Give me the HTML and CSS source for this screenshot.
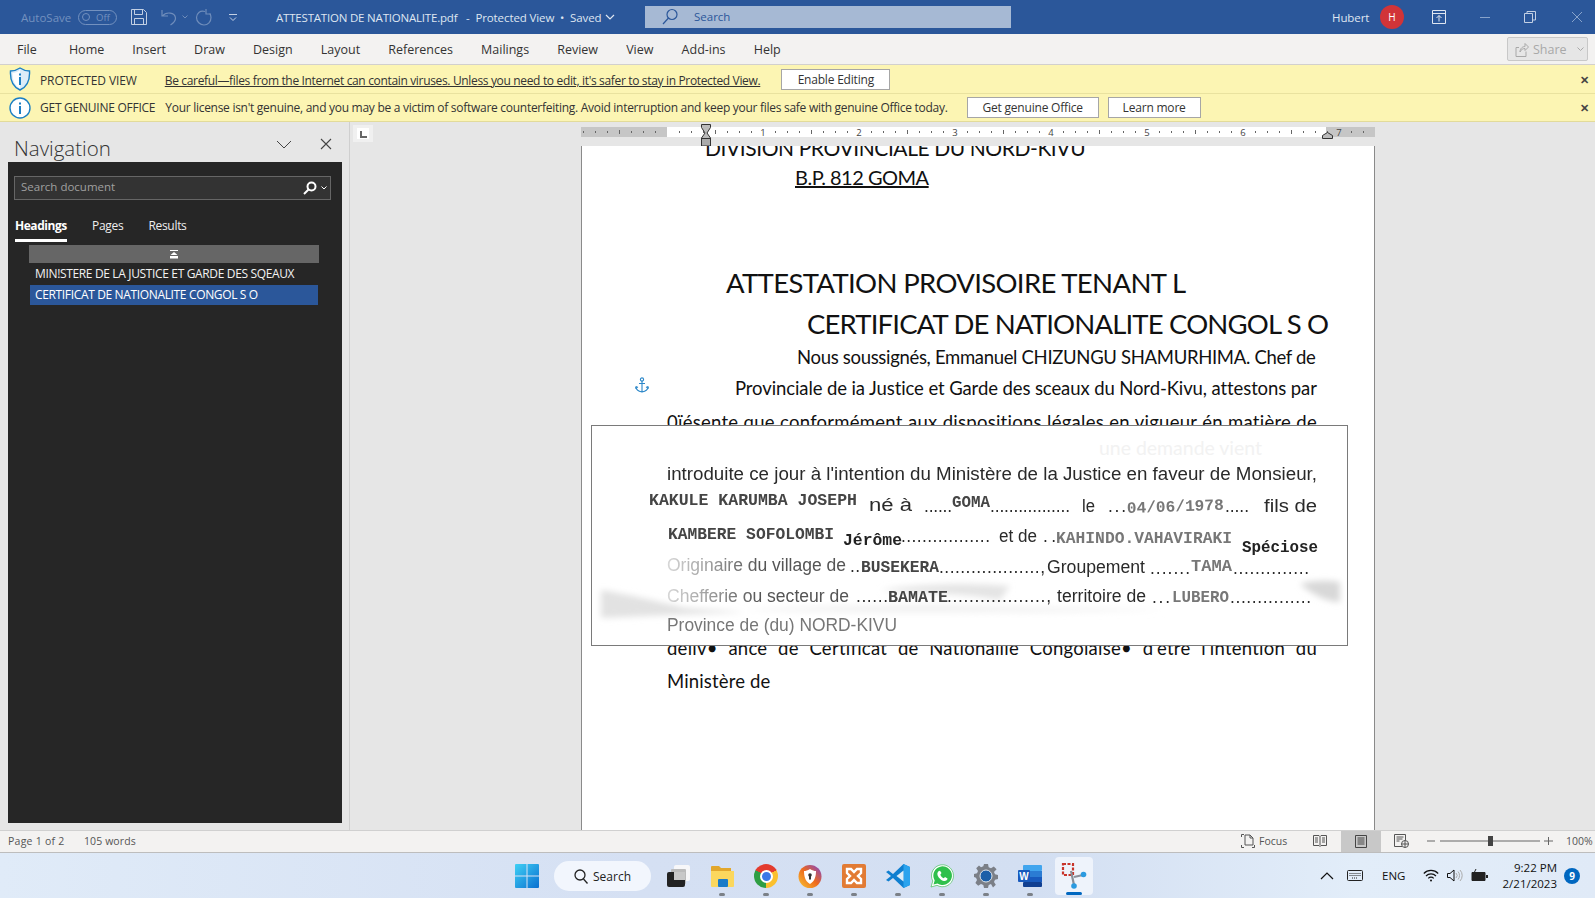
FILE: index.html
```html
<!DOCTYPE html>
<html lang="en">
<head>
<meta charset="utf-8">
<title>ATTESTATION DE NATIONALITE.pdf - Word</title>
<link rel="stylesheet" href="styles.css">
</head>
<body>
<div class="app">
  <header class="titlebar">
    <span class="autosave">AutoSave</span>
    <span class="toggle"><i class="knob"></i><span>Off</span></span>
    <svg class="qa save" width="18" height="18" viewBox="0 0 18 18" fill="none" stroke="#c3d0e4" stroke-width="1"><path d="M1.500 1.500h12l3 3v12h-15z"/><path d="M4.500 1.500v5h8v-5M4.500 16.500v-6h9v6"/></svg>
    <svg class="qa undo" width="18" height="18" viewBox="0 0 18 18" fill="none" stroke="#6f8dbb" stroke-width="1.200"><path d="M2 2v6h6M2.500 8C6 3.500 15 4 15.500 10c.2 3-2 5-5 7"/></svg>
    <svg class="qa undoarrow" width="6" height="4" viewBox="0 0 6 4" fill="none" stroke="#6f8dbb"><path d="M.5.5 3 3 5.500 .5"/></svg>
    <svg class="qa redo" width="18" height="18" viewBox="0 0 18 18" fill="none" stroke="#6f8dbb" stroke-width="1.200"><path d="M11 1v5h5M10 3.500C5 2 1.500 5.500 1.500 9.500S5 17 9 17s7-3 7-7.500c0-1.500-.5-3-1.500-4"/></svg>
    <svg class="qa custom" width="8" height="9" viewBox="0 0 8 9" fill="none" stroke="#c3d0e4"><path d="M0 1.500h8M1 4.500 4 7.500 7 4.500"/></svg>
    <span class="doc-title">ATTESTATION DE NATIONALITE.pdf</span>
    <span class="doc-state">-&nbsp; Protected View &nbsp;•&nbsp; Saved</span>
    <svg class="qa statechev" width="10" height="6" viewBox="0 0 10 6" fill="none" stroke="#dfe6f1" stroke-width="1.200"><path d="M1 1l4 4 4-4"/></svg>
    <div class="searchbox">
      <svg width="18" height="18" viewBox="0 0 18 18" fill="none" stroke="#2b579a" stroke-width="1.200"><circle cx="11" cy="6.500" r="5"/><path d="M7.500 10 2 16"/></svg>
      <span>Search</span>
    </div>
    <span class="username">Hubert</span>
    <span class="avatar">H</span>
    <svg class="win-btn ribbon-btn" width="14" height="14" viewBox="0 0 14 14" fill="none" stroke="#dfe6f1" stroke-width="1"><path d="M.5.500h13v13H.5zM.5 3.500h13M7 11.500V5.500M4.500 8 7 5.500 9.500 8"/></svg>
    <svg class="win-btn min-btn" width="12" height="12" viewBox="0 0 12 12" stroke="#88a3cb"><path d="M1 6.500h10"/></svg>
    <svg class="win-btn restore-btn" width="12" height="12" viewBox="0 0 12 12" fill="none" stroke="#c3d0e4"><path d="M.5 2.500h8v9h-8zM3 2.500V.500h8.500v8.500H8.500"/></svg>
    <svg class="win-btn close-btn" width="12" height="12" viewBox="0 0 12 12" fill="none" stroke="#88a3cb"><path d="M1 1l10 10M11 1 1 11"/></svg>
  </header>

  <nav class="ribbon">
    <span class="tab tab-file">File</span><span class="tab">Home</span><span class="tab">Insert</span><span class="tab">Draw</span><span class="tab">Design</span><span class="tab">Layout</span><span class="tab">References</span><span class="tab">Mailings</span><span class="tab">Review</span><span class="tab">View</span><span class="tab">Add-ins</span><span class="tab">Help</span>
    <div class="share">
      <svg width="14" height="15" viewBox="0 0 14 15" fill="none" stroke="#a8a8a8"><path d="M1 5.500h3M1 5.500v9h10v-5M5 10c0-4 3-5.500 5-5.500V1.500l3.500 3.500L10 8.500V6.500c-2 0-4 1-5 3.500z"/></svg>
      <span>Share</span>
      <svg class="share-chev" width="7" height="5" viewBox="0 0 7 5" fill="none" stroke="#a8a8a8"><path d="M.5.500 3.500 3.500 6.500.5"/></svg>
    </div>
  </nav>

  <section class="msgbar first">
    <svg class="msg-icon" width="22" height="24" viewBox="0 0 22 24"><path d="M11 1c3 2 6 3 9.500 3 .5 8-1 15-9.500 19C2.500 19 1 12 1.500 4 5 4 8 3 11 1z" fill="#dcecf8" stroke="#1b7fc4" stroke-width="1.400"/><path d="M11 3v18.500C5 18 3.500 12 3.500 6 6 6 9 5 11 3z" fill="#fff"/><rect x="10" y="10" width="2" height="8" fill="#1b7fc4"/><rect x="10" y="6.500" width="2" height="2" fill="#1b7fc4"/></svg>
    <strong class="msg-head">PROTECTED VIEW</strong>
    <span class="msg-link">Be careful—files from the Internet can contain viruses. Unless you need to edit, it's safer to stay in Protected View.</span>
    <button class="msg-btn btn-enable">Enable Editing</button>
    <span class="msg-close">✕</span>
  </section>
  <section class="msgbar second">
    <svg class="msg-icon" width="22" height="22" viewBox="0 0 22 22"><circle cx="11" cy="11" r="10" fill="#fff" stroke="#1b7fc4" stroke-width="1.400"/><rect x="10" y="9" width="2" height="8" fill="#1b7fc4"/><rect x="10" y="5.500" width="2" height="2" fill="#1b7fc4"/></svg>
    <strong class="msg-head">GET GENUINE OFFICE</strong>
    <span class="msg-text">Your license isn't genuine, and you may be a victim of software counterfeiting. Avoid interruption and keep your files safe with genuine Office today.</span>
    <button class="msg-btn btn-genuine">Get genuine Office</button>
    <button class="msg-btn btn-learn">Learn more</button>
    <span class="msg-close">✕</span>
  </section>

  <main class="workspace">
    <aside class="nav">
      <div class="nav-head">
        <span class="nav-title">Navigation</span>
        <svg class="nav-chev" width="16" height="9" viewBox="0 0 16 9" fill="none" stroke="#444"><path d="M1 1l7 7 7-7"/></svg>
        <svg class="nav-x" width="12" height="12" viewBox="0 0 12 12" fill="none" stroke="#444" stroke-width="1.100"><path d="M1 1l10 10M11 1 1 11"/></svg>
      </div>
      <div class="nav-body">
        <div class="nav-search">
          <span>Search document</span>
          <svg width="14" height="14" viewBox="0 0 14 14" fill="none" stroke="#fff" stroke-width="2"><circle cx="8.500" cy="5.500" r="4"/><path d="M5.500 8.500 1 13"/></svg>
          <svg class="ns-chev" width="6" height="4" viewBox="0 0 6 4" fill="none" stroke="#fff"><path d="M.5.500 3 3 5.500.5"/></svg>
        </div>
        <div class="nav-tabs">
          <span class="nt nt-on">Headings</span><span class="nt">Pages</span><span class="nt">Results</span>
        </div>
        <div class="nav-jump"><svg width="10" height="9" viewBox="0 0 10 9" fill="#fff"><rect x="1" y="0" width="8" height="1"/><path d="M5 2 8.500 5H1.500zM1 6h8v2.500H1z"/></svg></div>
        <div class="nav-item">MIN!STERE DE LA JUSTICE ET GARDE DES SQEAUX</div>
        <div class="nav-item selected">CERTIFICAT DE NATIONALITE CONGOL S O</div>
      </div>
    </aside>
    <div class="splitter"></div>
    <div class="docarea">
      <div class="tabstop"><i></i></div>
      <div class="ruler-row">
        <svg class="ruler" width="794" height="10" viewBox="0 0 794 10">
          <defs>
            <pattern id="ticks" x="86" y="0" width="96" height="10" patternUnits="userSpaceOnUse">
              <rect x="12" y="4" width="1" height="2" fill="#666"/><rect x="24" y="4" width="1" height="2" fill="#666"/><rect x="36" y="4" width="1" height="2" fill="#666"/><rect x="48" y="3" width="1" height="4" fill="#666"/><rect x="60" y="4" width="1" height="2" fill="#666"/><rect x="72" y="4" width="1" height="2" fill="#666"/><rect x="84" y="4" width="1" height="2" fill="#666"/>
            </pattern>
          </defs>
          <rect width="794" height="10" fill="#c6c6c6"/>
          <rect x="86" width="659" height="10" fill="#fff"/>
          <rect width="794" height="10" fill="url(#ticks)"/>
          <g class="ruler-num" text-anchor="middle">
            <text x="182" y="8.500">1</text><text x="278" y="8.500">2</text><text x="374" y="8.500">3</text><text x="470" y="8.500">4</text><text x="566" y="8.500">5</text><text x="662" y="8.500">6</text><text x="758" y="8.500">7</text>
          </g>
        </svg>
        <svg class="marker-left" width="12" height="23" viewBox="0 0 12 23"><path d="M1.500.5h9v3L7 9l3.500 5v3.500h-9V14L5 9 1.500 3.500z" fill="#bbb" stroke="#333"/><rect x="1.500" y="14.500" width="9" height="7.500" fill="#aaa" stroke="#333"/></svg>
        <svg class="marker-right" width="11" height="7" viewBox="0 0 11 7"><path d="M.5 6.500V3.500L5.500.5l5 3v3z" fill="#bbb" stroke="#333"/></svg>
      </div>
      <div class="page">
        <p class="dl l-div">DIVISION PROVINCIALE DU NORD-KIVU</p>
        <p class="dl l-bp"><u>B.P. 812 GOMA</u></p>
        <h1 class="dl l-att">ATTESTATION PROVISOIRE TENANT L</h1>
        <h1 class="dl l-cert">CERTIFICAT DE NATIONALITE CONGOL S O</h1>
        <p class="dl l-nous">Nous soussignés, Emmanuel CHIZUNGU SHAMURHIMA. Chef de</p>
        <p class="dl l-prov">Provinciale de ia Justice et Garde des sceaux du Nord-Kivu, attestons par</p>
        <p class="dl l-just l-pres">0ïésente que conformément aux dispositions légales en vigueur én matière de</p>
        <p class="dl l-just l-deliv">déliv• ance de Certificat de Nationaliié Congoiaise• d'être l'intention du</p>
        <p class="dl l-min">Ministère de</p>
        <svg class="anchor" width="14" height="16" viewBox="0 0 14 16" fill="none" stroke="#2a86c8" stroke-width="1.100"><circle cx="7" cy="2.500" r="1.600"/><path d="M7 4v11M4 6.500h6M1 9.500c0 3 3 5 6 5.500 3-.5 6-2.500 6-5.500M1 9.500l-.5 2M1 9.500l2 1M13 9.500l.5 2M13 9.500l-2 1"/></svg>

        <svg class="scan" width="757" height="221" viewBox="591 425 757 221">
          <defs>
            <filter id="soft" x="-20%" y="-80%" width="140%" height="260%"><feGaussianBlur stdDeviation="3"/></filter>
            <filter id="ink"><feGaussianBlur stdDeviation="0.350"/></filter>
            <linearGradient id="fade" x1="667" x2="760" y1="0" y2="0" gradientUnits="userSpaceOnUse"><stop offset="0" stop-color="#d8d8d8"/><stop offset="1" stop-color="#555"/></linearGradient>
          </defs>
          <rect x="591" y="425" width="757" height="221" fill="#fff"/>
          <path d="M601 590c25 4 50 10 85 18l60 4c-50 2-100 4-145 6z" fill="#e2e2e2" filter="url(#soft)"/>
          <path d="M740 610c80-4 180-8 260-4l170 4c-150 4-300 4-430 0z" fill="#f3f3f3" filter="url(#soft)"/>
          <path d="M880 590c40-6 90-8 130-4l-10 14c-40-8-80-6-120-10z" fill="#e4e4e4" filter="url(#soft)"/>
          <path d="M1300 584c14-4 26-4 40-2v20c-14 0-28-8-40-18z" fill="#d8d8d8" filter="url(#soft)"/>
          <text class="faint" x="1099" y="455" textLength="163" lengthAdjust="spacingAndGlyphs">une demande vient</text>
          <g class="printed" filter="url(#ink)">
            <text x="667" y="480" textLength="650" lengthAdjust="spacingAndGlyphs">introduite ce jour à l'intention du Ministère de la Justice en faveur de Monsieur,</text>
            <text x="869" y="511" textLength="43" lengthAdjust="spacingAndGlyphs">né à</text>
            <text x="924" y="512" textLength="28">......</text>
            <text x="990" y="512" textLength="80">.................</text>
            <text x="1082" y="512" textLength="13" lengthAdjust="spacingAndGlyphs">le</text>
            <text x="1108" y="512" textLength="18">...</text>
            <text x="1225" y="512" textLength="24">.....</text>
            <text x="1264" y="512" textLength="53" lengthAdjust="spacingAndGlyphs">fils de</text>
            <text x="901" y="542" textLength="89">.................</text>
            <text x="999" y="542" textLength="38" lengthAdjust="spacingAndGlyphs">et de</text>
            <text x="1043" y="542" textLength="13">..</text>
            <text x="667" y="571" textLength="179" lengthAdjust="spacingAndGlyphs" class="fade">Originaire du village de</text>
            <text x="850" y="572" textLength="10">..</text>
            <text x="939" y="573" textLength="106">...................,</text>
            <text x="1047" y="573" textLength="98" lengthAdjust="spacingAndGlyphs">Groupement</text>
            <text x="1150" y="574" textLength="40">.......</text>
            <text x="1233" y="574" textLength="76">..............</text>
            <text x="667" y="602" textLength="182" lengthAdjust="spacingAndGlyphs" class="fade">Chefferie ou secteur de</text>
            <text x="856" y="602" textLength="32">......</text>
            <text x="947" y="602" textLength="104">..................,</text>
            <text x="1057" y="602" textLength="89" lengthAdjust="spacingAndGlyphs">territoire de</text>
            <text x="1152" y="603" textLength="18">...</text>
            <text x="1230" y="603" textLength="81">...............</text>
            <text class="dim" x="667" y="631" textLength="230" lengthAdjust="spacingAndGlyphs">Province de (du) NORD-KIVU</text>
          </g>
          <g class="typed" filter="url(#ink)">
            <text x="649" y="505" textLength="208" lengthAdjust="spacingAndGlyphs">KAKULE KARUMBA JOSEPH</text>
            <text x="952" y="507" textLength="38" lengthAdjust="spacingAndGlyphs">GOMA</text>
            <text class="light" x="1127" y="513" textLength="97" lengthAdjust="spacingAndGlyphs" transform="rotate(-2 1127 513)">04/06/1978</text>
            <text x="668" y="539" textLength="166" lengthAdjust="spacingAndGlyphs">KAMBERE SOFOLOMBI</text>
            <text class="bold" x="843" y="545" textLength="59" lengthAdjust="spacingAndGlyphs">Jérôme</text>
            <text class="light" x="1056" y="543" textLength="176" lengthAdjust="spacingAndGlyphs">KAHINDO.VAHAVIRAKI</text>
            <text class="bold" x="1242" y="552" textLength="76" lengthAdjust="spacingAndGlyphs">Spéciose</text>
            <text x="861" y="572" textLength="78" lengthAdjust="spacingAndGlyphs">BUSEKERA</text>
            <text class="light" x="1191" y="571" textLength="41" lengthAdjust="spacingAndGlyphs">TAMA</text>
            <text x="888" y="602" textLength="60" lengthAdjust="spacingAndGlyphs">BAMATE</text>
            <text class="light" x="1172" y="602" textLength="57" lengthAdjust="spacingAndGlyphs">LUBERO</text>
          </g>
          <rect x="591.500" y="425.500" width="756" height="220" fill="none" stroke="#7a7a7a"/>
        </svg>
      </div>
    </div>
  </main>

  <footer class="statusbar">
    <span class="st-page">Page 1 of 2</span>
    <span class="st-words">105 words</span>
    <svg class="st-focus" width="14" height="14" viewBox="0 0 14 14" fill="none" stroke="#555"><path d="M.5 3V.5H3M.5 11v2.500H3M11 13.500h2.500V11M4 1h5l3 3v7H4zM9 1v3h3"/></svg>
    <span class="st-focustxt">Focus</span>
    <svg class="st-read" width="14" height="12" viewBox="0 0 14 12" fill="none" stroke="#555"><path d="M.5.500h5.500l1 1 1-1h5.500v10H8l-1 1-1-1H.5zM7 1.500v9M2 3h3M2 5h3M2 7h3M9 3h3M9 5h3M9 7h3"/></svg>
    <span class="st-print"><svg width="12" height="13" viewBox="0 0 12 13" fill="none" stroke="#444"><path d="M.5.500h11v12H.5zM2.500 3h7M2.500 5h7M2.500 7h7M2.500 9h7"/></svg></span>
    <svg class="st-web" width="15" height="14" viewBox="0 0 15 14" fill="none" stroke="#555"><path d="M8 12.500H.5V.5h11v6M2.500 3h7M2.500 5h6M2.500 7h3"/><circle cx="11" cy="10" r="3.500"/><path d="M7.500 10h7M11 6.500v7"/></svg>
    <svg class="st-zoom" width="128" height="14" viewBox="0 0 128 14"><path d="M0 7h8M13 7h100M117 7h9M121.500 3v8" stroke="#666" fill="none"/><rect x="61" y="2" width="5" height="10" fill="#444"/></svg>
    <span class="st-pct">100%</span>
  </footer>

  <div class="taskbar">
    <div class="tb-item">
      <svg width="24" height="24" viewBox="0 0 24 24"><defs><linearGradient id="w" x1="0" y1="0" x2="1" y2="1"><stop offset="0" stop-color="#3fd0f5"/><stop offset="1" stop-color="#0a6fd0"/></linearGradient></defs><path d="M0 1q0-1 1-1h10.500v11.500H0zM12.500 0H23q1 0 1 1v10.500H12.500zM0 12.500h11.500V24H1q-1 0-1-1zM12.500 12.500H24V23q0 1-1 1H12.500z" fill="url(#w)"/></svg>
    </div>
    <div class="tb-search">
      <svg width="14" height="15" viewBox="0 0 14 15" fill="none" stroke="#222" stroke-width="1.300"><circle cx="6" cy="6" r="5"/><path d="M9.500 10l4 4.500"/></svg>
      <span>Search</span>
    </div>
    <div class="tb-item">
      <svg width="25" height="24" viewBox="0 0 25 24"><rect x="8" y="1" width="16" height="16" rx="2" fill="#f7f7f9"/><rect x="5" y="5" width="15" height="15" rx="1" fill="#bbb"/><rect x="1" y="8" width="18" height="15" rx="2" fill="#222"/><path d="M8 8h11v8H8z" fill="#c8c8c8"/></svg>
    </div>
    <div class="tb-item dot">
      <svg width="25" height="24" viewBox="0 0 25 24"><path d="M1 3q0-1 1-1h7l2 2h10v4H1z" fill="#e2a72c"/><path d="M1 7h23v15q0 1-1 1H2q-1 0-1-1z" fill="#fbd75d"/><rect x="8" y="15" width="10" height="8" rx="1" fill="#1a7bc8"/></svg>
    </div>
    <div class="tb-item dot">
      <span class="chrome"><i></i></span>
    </div>
    <div class="tb-item dot">
      <svg width="24" height="25" viewBox="0 0 24 25"><defs><linearGradient id="b" x1="0" y1="1" x2="1" y2="0"><stop offset="0" stop-color="#f9c531"/><stop offset=".5" stop-color="#ee6a1c"/><stop offset="1" stop-color="#7b3fd0"/></linearGradient></defs><circle cx="12" cy="12.500" r="11.500" fill="url(#b)"/><path d="M12 5c2.500 1.500 4 2 6 2 0 5-1 10-6 13-5-3-6-8-6-13 2 0 3.500-.5 6-2z" fill="#fff"/><circle cx="12" cy="11" r="1.800" fill="#333"/><rect x="11" y="12" width="2" height="3.500" fill="#333"/></svg>
    </div>
    <div class="tb-item dot">
      <svg width="24" height="24" viewBox="0 0 24 24"><rect width="24" height="24" rx="2" fill="#e27b34"/><path d="M5 5h4l3 3 3-3h4v4l-3 3 3 3v4h-4l-3-3-3 3H5v-4l3-3-3-3z" fill="none" stroke="#fff" stroke-width="2.400"/></svg>
    </div>
    <div class="tb-item dot">
      <svg width="24" height="24" viewBox="0 0 24 24"><path d="M17.500 0 24 3v18l-6.500 3L7 14l-4.500 3.500L0 16l5-4-5-4 2.500-1.500L7 10z" fill="#0f7fd0"/><path d="M17.500 0 24 3v18l-6.500 3z" fill="#2aa3ee"/><path d="M17.500 6.500v11L10.500 12z" fill="#fff" fill-opacity=".85"/></svg>
    </div>
    <div class="tb-item dot">
      <svg width="24" height="24" viewBox="0 0 24 24"><path d="M1 23l1.800-6A11 11 0 1 1 7 21.300z" fill="#fff" stroke="#2bb741" stroke-width=".6"/><path d="M3.500 20.500l1.200-4A9.300 9.300 0 1 1 7.500 19.400z" fill="#2fc04c"/><path d="M9 7c-1 .5-2 2-1.500 4s3.500 5.500 6.500 6c2 .2 3.500-1 3.500-2.500l-2.500-1.500-1.200 1.200c-1.500-.5-3-2-3.500-3.500L11.500 9 10 6.800z" fill="#fff"/></svg>
    </div>
    <div class="tb-item dot">
      <svg width="24" height="24" viewBox="0 0 24 24"><path d="M10 0h4l.7 3.200 2.300 1 2.800-1.800 2.800 2.800L20 8l1 2.300 3 .7v4l-3 .7-1 2.300 1.800 2.800-2.800 2.800L17 20l-2.300 1-.7 3h-4l-.7-3L7 20l-2.800 1.800-2.800-2.800L3 16l-1-2.300L0 13v-3l3-.7 1-2.300-1.800-2.800 2.800-2.800L7 3.200l2.300-1z" fill="#7b7f87"/><circle cx="12" cy="12" r="6" fill="#1c5fa8" stroke="#dfe6ee" stroke-width="1"/></svg>
    </div>
    <div class="tb-item dot">
      <svg width="24" height="24" viewBox="0 0 24 24"><rect x="5" y="1" width="19" height="6" rx="1" fill="#41a5ee"/><rect x="5" y="7" width="19" height="6" fill="#2b7cd3"/><rect x="5" y="13" width="19" height="5" fill="#185abd"/><rect x="5" y="18" width="19" height="5" rx="1" fill="#103f91"/><rect y="6" width="12" height="12" rx="1" fill="#185abd"/><text class="w-letter" x="6" y="15.500" text-anchor="middle">W</text></svg>
    </div>
    <div class="tb-item running">
      <svg width="26" height="28" viewBox="0 0 26 28" fill="none"><path d="M2 2h10v11H2z" stroke="#c8342b" stroke-width="2.200" stroke-dasharray="3 1.500"/><path d="M10 9l3 14M13 15l9-2" stroke="#8a8f98" stroke-width="2.200"/><circle cx="22.500" cy="12.500" r="2.800" fill="#2b9ae0"/><circle cx="13" cy="24" r="2.800" fill="#2b9ae0"/></svg>
    </div>
    <div class="tray">
      <svg class="tr-chev" width="14" height="8" viewBox="0 0 14 8" fill="none" stroke="#111" stroke-width="1.200"><path d="M1 7l6-6 6 6"/></svg>
      <svg class="tr-kbd" width="16" height="11" viewBox="0 0 16 11" fill="none" stroke="#222"><rect x=".5" y=".5" width="15" height="10" rx="1"/><path d="M2.500 3.500h11M2.500 5.500h11M5 8h6" stroke-dasharray="1 1"/></svg>
      <span class="tr-lang">ENG</span>
      <svg class="tr-wifi" width="16" height="13" viewBox="0 0 16 13" fill="none" stroke="#111" stroke-width="1.200"><path d="M.8 4.500a10 10 0 0 1 14.400 0M3 7a7 7 0 0 1 10 0M5.300 9.300a3.700 3.700 0 0 1 5.400 0"/><circle cx="8" cy="11.500" r="1" fill="#111" stroke="none"/></svg>
      <svg class="tr-vol" width="16" height="13" viewBox="0 0 16 13" fill="none" stroke="#111"><path d="M.5 4.500h2.500L7 1v11L3 8.500H.5z"/><path d="M9 4a3.500 3.500 0 0 1 0 5M11 2.500a6 6 0 0 1 0 8M13 1a8 8 0 0 1 0 11" stroke="#aaa"/></svg>
      <svg class="tr-batt" width="17" height="13" viewBox="0 0 17 13"><path d="M1 3.500h13v8H1z" fill="#222" stroke="#222"/><rect x="15" y="6" width="2" height="3" fill="#222"/><path d="M5 0 2 6h3L4 10" fill="none" stroke="#222"/></svg>
      <div class="tr-clock"><span>9:22 PM</span><span>2/21/2023</span></div>
      <span class="tr-badge">9</span>
    </div>
  </div>
</div>
</body>
</html>
```

FILE: styles.css
```css
* { box-sizing: border-box; }
html, body { margin: 0; padding: 0; }
body { width: 1595px; height: 898px; overflow: hidden; font-family: "Open Sans", "Noto Sans", sans-serif; }
.app { display: flex; flex-direction: column; width: 1595px; height: 898px; background: #e6e6e6; }
svg { display: block; flex: none; }
p, h1 { margin: 0; font-weight: 400; }

/* title bar */
.titlebar { display: flex; align-items: center; height: 34px; background: #2b579a; color: #dfe6f1; font-size: 11.500px; flex: none; }
.autosave { margin-left: 21px; width: 51px; color: #7391bf; white-space: nowrap; }
.toggle { margin-left: 6px; width: 39px; height: 15px; border: 1px solid #7391bf; border-radius: 8px; display: flex; align-items: center; gap: 6px; padding-left: 3px; color: #7391bf; font-size: 9.500px; }
.knob { width: 8px; height: 8px; border-radius: 50%; border: 1px solid #7391bf; }
.save { margin-left: 13px; }
.undo { margin-left: 12px; }
.undoarrow { margin-left: 4px; }
.redo { margin-left: 7px; }
.custom { margin-left: 16px; }
.doc-title { margin-left: 39px; width: 176px; white-space: nowrap; letter-spacing: -.2px; }
.doc-state { margin-left: 14px; width: 137px; white-space: nowrap; letter-spacing: -.1px; }
.statechev { margin-left: 2px; }
.searchbox { margin-left: 30px; width: 366px; height: 22px; background: #a6b9d4; display: flex; align-items: center; padding-left: 16px; gap: 15px; color: #2b579a; padding-bottom: 1px; }
.username { margin-left: 321px; width: 37px; white-space: nowrap; letter-spacing: -.1px; }
.avatar { width: 24px; height: 24px; border-radius: 50%; background: #d13438; color: #fff; display: flex; align-items: center; justify-content: center; font-size: 10px; margin-left: 11px; }
.ribbon-btn { margin-left: 28px; }
.min-btn { margin-left: 33px; }
.restore-btn { margin-left: 33px; }
.close-btn { margin-left: 35px; }

/* ribbon */
.ribbon { display: flex; align-items: center; height: 31px; background: #f3f2f1; border-bottom: 1px solid #d2d0ce; padding-left: 17px; font-size: 12.500px; color: #333; flex: none; gap: 28.100px; }
.tab { white-space: nowrap; }
.tab-file { margin-right: 4px; }
.share { margin-left: auto; margin-right: 7px; width: 81px; height: 24px; border: 1px solid #c8c8c8; border-radius: 2px; background: #e6e6e6; color: #a8a8a8; display: flex; align-items: center; padding-left: 7px; gap: 4px; }
.share-chev { margin-left: 6px; }

/* message bars */
.msgbar { display: flex; align-items: center; background: #fcf5b3; font-size: 12px; color: #333; flex: none; position: relative; white-space: nowrap; }
.first { height: 29px; border-bottom: 1px solid #e9e29f; }
.second { height: 28px; border-bottom: 1px solid #e2db9a; }
.msg-icon { margin-left: 9px; width: 22px; }
.msg-head { font-weight: 400; margin-left: 9px; letter-spacing: -.25px; }
.first .msg-head { letter-spacing: -.1px; margin-top: 2px; }
.first .msg-link { margin: 2px 0 0 28px; text-decoration: underline; letter-spacing: -.34px; }
.second .msg-text { margin-left: 10px; letter-spacing: -.28px; }
.msg-btn { height: 21px; background: #fff; border: 1px solid #a6a6a6; font: 12px "Open Sans", sans-serif; color: #333; padding: 0; letter-spacing: -.2px; }
.btn-enable { margin-left: 21px; width: 109px; }
.btn-genuine { margin-left: 19px; width: 132px; }
.btn-learn { margin-left: 9px; width: 93px; }
.msg-close { position: absolute; right: 6px; font-size: 11px; font-weight: 700; color: #444; }

/* workspace */
.workspace { height: 708px; flex: none; display: flex; min-height: 0; background: #e6e6e6; overflow: hidden; }
.nav { width: 349px; padding-left: 8px; padding-right: 7px; display: flex; flex-direction: column; flex: none; }
.nav-head { height: 40px; display: flex; align-items: center; flex: none; }
.nav-title { font-size: 20.500px; font-weight: 300; color: #333; margin-left: 6px; margin-top: 11px; }
.nav-chev { margin-left: auto; margin-top: 4px; }
.nav-x { margin-left: 28px; margin-right: 10px; margin-top: 4px; }
.nav-body { flex: 1; background: #262626; margin-bottom: 7px; padding: 14px 0 0 6px; color: #fff; }
.nav-search { width: 317px; height: 24px; background: #333; border: 1px solid #666; display: flex; align-items: center; padding-left: 6px; font-size: 11.500px; color: #a0a0a0; }
.nav-search span { margin-right: auto; padding-bottom: 3px; }
.ns-chev { margin: 0 3px 0 4px; }
.nav-tabs { display: flex; margin-top: 15px; font-size: 12px; height: 27px; margin-left: 1px; }
.nt { margin-right: 25px; letter-spacing: -.3px; color: #eee; padding-top: 2px; }
.nt-on { font-weight: 700; color: #fff; width: 52px; border-bottom: 3px solid #fff; height: 27px; letter-spacing: -.45px; }
.nav-jump { width: 290px; height: 18px; background: #666; margin: 3px 0 0 15px; display: flex; align-items: center; justify-content: center; }
.nav-item { margin-left: 16px; width: 288px; height: 20px; line-height: 20px; font-size: 12px; padding-left: 5px; white-space: nowrap; letter-spacing: -.35px; color: #f2f2f2; margin-top: 1px; }
.nav-item.selected { background: #2b579a; color: #fff; }
.splitter { width: 1px; background: #cfcfcf; flex: none; }

/* document */
.docarea { flex: 1; position: relative; display: flex; flex-direction: column; padding-top: 5px; overflow: hidden; min-width: 0; }
.tabstop { position: absolute; left: 3px; top: 3px; width: 20px; height: 17px; background: #f0f0f0; padding: 3px 4px; }
.tabstop i { display: block; width: 12px; height: 11px; background: #fff; position: relative; }
.tabstop i::after { content: ""; position: absolute; left: 3px; top: 3px; width: 5px; height: 5px; border-left: 2px solid #666; border-bottom: 2px solid #666; }
.ruler-row { margin-left: 231px; height: 10px; position: relative; flex: none; }
.ruler { overflow: visible; }
.ruler-num { font: 9.500px "Open Sans", sans-serif; fill: #444; }
.marker-left { position: absolute; left: 119px; top: -3px; }
.marker-right { position: absolute; left: 741px; top: 5px; z-index: 3; }
.page { position: relative; margin: 9px 0 0 231px; width: 794px; flex: 1; background: #fff; border-left: 1px solid #8a8a8a; border-right: 1px solid #8a8a8a; overflow: hidden; font-family: Lato, "Open Sans", sans-serif; color: #111; }
.dl { white-space: nowrap; }
.l-div { margin: -10px 0 0 123px; font-size: 21px; line-height: 24px; letter-spacing: -.42px; }
.l-bp { margin: 5px 0 0 213px; font-size: 20px; line-height: 24px; letter-spacing: -.5px; }
.l-att { margin: 77px 0 0 144px; font-size: 27.500px; line-height: 34px; letter-spacing: -.65px; }
.l-cert { margin: 7px 0 0 225px; font-size: 27.500px; line-height: 34px; letter-spacing: -.83px; }
.l-nous { margin: 4px 0 0 215px; font-size: 18.500px; line-height: 24px; letter-spacing: -.32px; }
.l-prov { margin: 7px 0 0 153px; font-size: 18.500px; line-height: 24px; letter-spacing: -.1px; }
.l-just { margin-left: 85px; width: 650px; font-size: 18.500px; line-height: 24px; white-space: normal; text-align: justify; text-align-last: justify; letter-spacing: .25px; }
.l-pres { margin-top: 10px; }
.l-deliv { margin-top: 202px; }
.l-min { margin: 9px 0 0 85px; font-size: 18.500px; line-height: 24px; letter-spacing: .15px; }
.anchor { position: absolute; left: 53px; top: 231px; }
.scan { position: absolute; left: 9px; top: 279px; }
.faint { font: 19px Lato, sans-serif; fill: #f2f2f2; }
.printed text { font: 17.500px "Liberation Sans", Arial, sans-serif; fill: #2a2a2a; }
.printed .fade { fill: url(#fade); }
.printed .dim { fill: #777; }
.typed text { font: 700 16px "Liberation Mono", monospace; fill: #444; }
.typed .light { fill: #777; }
.typed .bold { fill: #222; }
.w-letter { font: 700 10px "Liberation Sans", sans-serif; fill: #fff; }

/* status */
.statusbar { display: flex; align-items: center; height: 23px; background: #f3f2f1; border-top: 1px solid #d0d0d0; border-bottom: 1px solid #bdbdbd; font-size: 10.500px; color: #555; padding: 0 0 1px 8px; flex: none; }
.st-page { width: 76px; white-space: nowrap; letter-spacing: .25px; }
.st-words { width: 1157px; white-space: nowrap; letter-spacing: .1px; }
.st-focustxt { margin-left: 4px; width: 54px; }
.st-print { margin-left: 14px; width: 40px; height: 21px; background: #c8c8c8; display: flex; align-items: center; justify-content: center; }
.st-web { margin-left: 13px; }
.st-zoom { margin-left: 18px; }
.st-pct { margin-left: 11px; }

/* taskbar */
.taskbar { height: 45px; flex: none; display: flex; align-items: center; padding-left: 505px; background: linear-gradient(90deg, #e0ebf8 0%, #d5e0f3 40%, #d3dff2 65%, #e2edf9 85%, #e0eaf7 100%); }
.tb-item { width: 44px; height: 38px; margin-top: 1px; display: flex; align-items: center; justify-content: center; position: relative; flex: none; }
.tb-search { width: 97px; height: 30px; border-radius: 15px; background: #f2f6fd; margin: 1px 5px 0; display: flex; align-items: center; justify-content: center; gap: 5px; font-size: 12px; color: #222; flex: none; }
.dot::after { content: ""; position: absolute; bottom: -1px; left: 19px; width: 6px; height: 3px; border-radius: 2px; background: #7b8087; }
.tb-item.running { background: #eef3fb; width: 38px; margin-left: 3px; border-radius: 4px; }
.running::after { content: ""; position: absolute; bottom: 0; left: 11px; width: 16px; height: 3px; border-radius: 2px; background: #0067c0; }
.chrome { width: 24px; height: 24px; border-radius: 50%; background: conic-gradient(from -60deg, #e33b2e 0 120deg, #fbc02d 120deg 240deg, #2f9e44 240deg 360deg); display: flex; align-items: center; justify-content: center; }
.chrome i { box-sizing: content-box; width: 9px; height: 9px; border-radius: 50%; background: #3b78e7; border: 2px solid #fff; }
.tray { margin-left: auto; display: flex; align-items: center; padding-right: 15px; color: #111; }
.tr-kbd { margin-left: 13px; }
.tr-lang { margin-left: 19px; font-size: 11.500px; width: 22px; white-space: nowrap; }
.tr-wifi { margin-left: 19px; }
.tr-vol { margin-left: 8px; }
.tr-batt { margin-left: 8px; }
.tr-clock { margin-left: 0; width: 69px; display: flex; flex-direction: column; align-items: flex-end; font-size: 11.500px; line-height: 16px; }
.tr-badge { margin-left: 7px; width: 16px; height: 16px; border-radius: 50%; background: #0067c0; color: #fff; font-size: 10px; font-weight: 700; display: flex; align-items: center; justify-content: center; }
```
